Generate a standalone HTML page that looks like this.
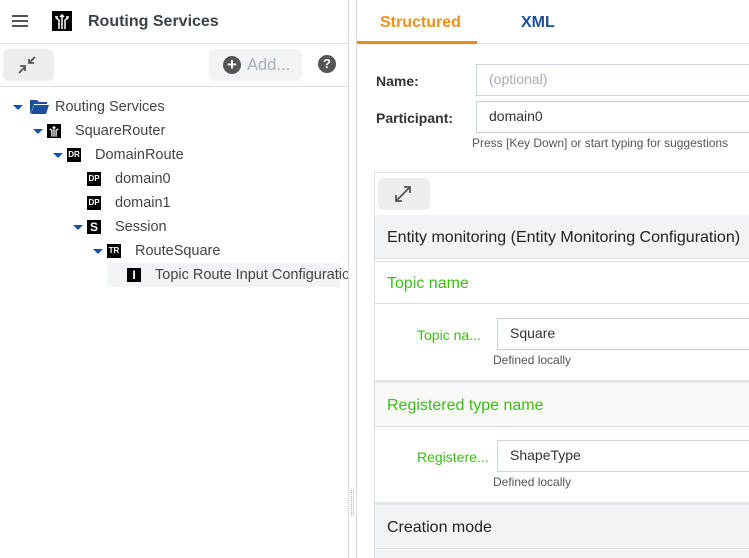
<!DOCTYPE html>
<html><head><meta charset="utf-8"><style>
*{box-sizing:border-box;margin:0;padding:0}
body{width:749px;height:558px;overflow:hidden;background:#fff;font-family:"Liberation Sans",sans-serif;position:relative;color:#444}
.a{position:absolute}
.t{position:absolute;white-space:nowrap;font-size:14px;line-height:24px}
.tr{font-size:14.5px}
.ic{position:absolute;background:#000;color:#fff;font-size:8px;font-weight:bold;text-align:center;width:14px;height:14px;line-height:14px}
.car{position:absolute;width:0;height:0;border-left:5px solid transparent;border-right:5px solid transparent;border-top:5px solid #1a4f9c}
.inp{position:absolute;border:1px solid #c8d3e0;border-right:none;background:#fff;font-size:14px;line-height:29px;padding-left:12px;color:#333}
.g{color:#3cbe14}
</style></head><body>
<div class="a" style="left:12px;top:15px;width:16px;height:2px;background:#555"></div>
<div class="a" style="left:12px;top:20px;width:16px;height:2px;background:#555"></div>
<div class="a" style="left:12px;top:25px;width:16px;height:2px;background:#555"></div>
<svg class="a" style="left:52px;top:11px" width="20" height="20" viewBox="0 0 20 20"><rect width="20" height="20" fill="#000"/><path d="M10 4v14M7 18V9L4 7M13 18V9l3-2M8 6l2-2 2 2M3 6h3M14 6h3" stroke="#fff" stroke-width="1.5" fill="none"/></svg>
<div class="t" style="left:88px;top:10px;font-size:16px;font-weight:bold;color:#3c4248">Routing Services</div>
<div class="a" style="left:0;top:43px;width:348px;height:1px;background:#ddd"></div>
<div class="a" style="left:3px;top:49px;width:51px;height:32px;background:#eee;border-radius:6px"></div>
<svg class="a" style="left:17px;top:55px" width="20" height="20" viewBox="0 0 20 20"><path d="M2 18l6-6M3 11h5v5M18 2l-6 6M12 4v4h5" stroke="#555" stroke-width="1.8" fill="none"/></svg>
<div class="a" style="left:209px;top:49px;width:93px;height:32px;background:#f1f3f5;border-radius:6px"></div>
<div class="a" style="left:223px;top:56px;width:18px;height:18px;border-radius:50%;background:#555;color:#fff;font-weight:bold;font-size:17px;line-height:18px;text-align:center">+</div>
<div class="t" style="left:247px;top:53px;font-size:16.5px;color:#a8b0ba">Add...</div>
<div class="a" style="left:318px;top:55px;width:18px;height:18px;border-radius:50%;background:#555;color:#fff;font-weight:bold;font-size:13px;line-height:18px;text-align:center">?</div>
<div class="a" style="left:0;top:86px;width:348px;height:1px;background:#ddd"></div>
<div class="car" style="left:13px;top:105px"></div>
<svg class="a" style="left:30px;top:99px" width="19" height="15" viewBox="0 0 19 15"><path d="M0 1h7l2 2h8v2H4L1 14H0z M4 6h15l-3 9H1z" fill="#1a4f9c"/></svg>
<div class="t tr" style="left:55px;top:95px">Routing Services</div>
<div class="car" style="left:33px;top:129px"></div>
<svg class="a" style="left:47px;top:124px" width="14" height="14" viewBox="0 0 20 20"><rect width="20" height="20" fill="#000"/><path d="M10 4v14M7 18V9L4 7M13 18V9l3-2M8 6l2-2 2 2" stroke="#fff" stroke-width="1.8" fill="none"/></svg>
<div class="t tr" style="left:75px;top:119px">SquareRouter</div>
<div class="car" style="left:53px;top:153px"></div>
<div class="ic" style="left:67px;top:148px">DR</div>
<div class="t tr" style="left:95px;top:143px">DomainRoute</div>
<div class="ic" style="left:87px;top:172px">DP</div>
<div class="t tr" style="left:115px;top:167px">domain0</div>
<div class="ic" style="left:87px;top:196px">DP</div>
<div class="t tr" style="left:115px;top:191px">domain1</div>
<div class="car" style="left:73px;top:225px"></div>
<div class="ic" style="left:87px;top:220px;font-size:12px">S</div>
<div class="t tr" style="left:115px;top:215px">Session</div>
<div class="car" style="left:93px;top:249px"></div>
<div class="ic" style="left:107px;top:244px">TR</div>
<div class="t tr" style="left:135px;top:239px">RouteSquare</div>
<div class="a" style="left:107px;top:263px;width:233px;height:24px;background:#f1f3f5"></div>
<div class="ic" style="left:127px;top:268px;font-size:12px">I</div>
<div class="t tr" style="left:155px;top:263px;width:193px;overflow:hidden">Topic Route Input Configuration</div>
<div class="a" style="left:348px;top:0;width:1px;height:558px;background:#ddd"></div>
<div class="a" style="left:356px;top:0;width:1px;height:558px;background:#ddd"></div>
<div class="a" style="left:351px;top:490px;width:3px;height:25px;border-left:1px dotted #aaa;border-right:1px dotted #aaa"></div>
<div class="t" style="left:380px;top:11px;font-size:16px;font-weight:bold;color:#f0901a">Structured</div>
<div class="t" style="left:521px;top:11px;font-size:16px;font-weight:bold;color:#1a4f9c">XML</div>
<div class="a" style="left:357px;top:43px;width:392px;height:1px;background:#ddd"></div>
<div class="a" style="left:357px;top:41px;width:120px;height:3px;background:#ea8b12"></div>
<div class="t" style="left:376px;top:69px;font-weight:bold;color:#333">Name:</div>
<div class="inp" style="left:476px;top:64px;width:273px;height:32px;color:#aab">(optional)</div>
<div class="t" style="left:376px;top:106px;font-weight:bold;color:#333">Participant:</div>
<div class="inp" style="left:476px;top:101px;width:273px;height:32px">domain0</div>
<div class="t" style="left:472px;top:131px;font-size:12px;color:#555">Press [Key Down] or start typing for suggestions</div>
<div class="a" style="left:374px;top:172px;width:375px;height:386px;border:1px solid #ddd;border-right:none;background:#fff"></div>
<div class="a" style="left:378px;top:178px;width:52px;height:32px;background:#eee;border-radius:6px"></div>
<svg class="a" style="left:393px;top:184px" width="20" height="20" viewBox="0 0 20 20"><path d="M3 17l14-14M3 11v6h6M11 3h6v6" stroke="#555" stroke-width="1.8" fill="none"/></svg>
<div class="a" style="left:375px;top:215px;width:374px;height:44px;background:#f1f3f5;border-bottom:1px solid #ddd"></div>
<div class="t" style="left:387px;top:226px;font-size:16px;color:#222">Entity monitoring (Entity Monitoring Configuration)</div>
<div class="a" style="left:375px;top:261px;width:374px;height:43px;background:#fff;border-top:1px solid #ddd;border-bottom:1px solid #ddd"></div>
<div class="t g" style="left:387px;top:272px;font-size:16px">Topic name</div>
<div class="t g" style="left:417px;top:323px">Topic na...</div>
<div class="inp" style="left:497px;top:318px;width:252px;height:32px">Square</div>
<div class="t" style="left:493px;top:348px;font-size:12px;color:#555">Defined locally</div>
<div class="a" style="left:375px;top:380px;width:374px;height:3px;background:#e4e7ea"></div>
<div class="a" style="left:375px;top:383px;width:374px;height:44px;background:#f9f9f9;border-bottom:1px solid #ddd"></div>
<div class="t g" style="left:387px;top:394px;font-size:16px">Registered type name</div>
<div class="t g" style="left:417px;top:445px">Registere...</div>
<div class="inp" style="left:497px;top:440px;width:252px;height:32px">ShapeType</div>
<div class="t" style="left:493px;top:470px;font-size:12px;color:#555">Defined locally</div>
<div class="a" style="left:375px;top:502px;width:374px;height:3px;background:#e4e7ea"></div>
<div class="a" style="left:375px;top:505px;width:374px;height:44px;background:#f1f3f5;border-bottom:1px solid #ddd"></div>
<div class="t" style="left:387px;top:516px;font-size:16px;color:#222">Creation mode</div>
<div class="a" style="left:375px;top:550px;width:374px;height:8px;background:#f1f3f5"></div>
</body></html>
